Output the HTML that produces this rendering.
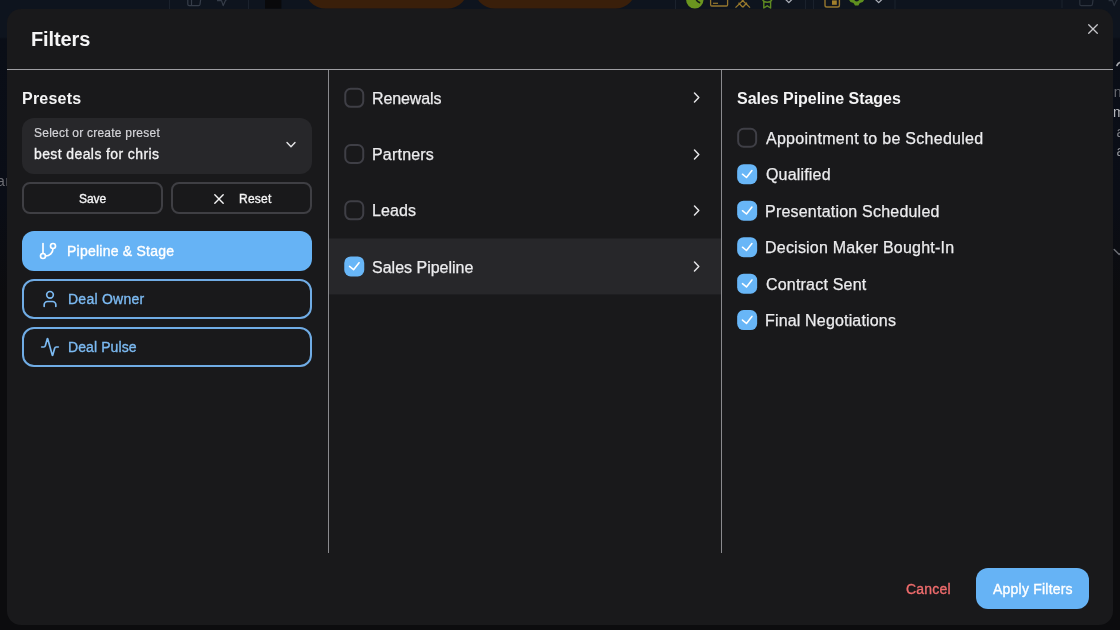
<!DOCTYPE html>
<html lang="en">
<head>
<meta charset="utf-8">
<title>Filters</title>
<style>
html,body{margin:0;padding:0;}
body{width:1120px;height:630px;overflow:hidden;position:relative;background:#0c0c0e;font-family:"Liberation Sans",sans-serif;color:#ececee;}
.abs{position:absolute;}
#bgtop{left:0;top:0;width:1120px;height:320px;background:linear-gradient(#0e141e 0,#0e141e 37px,#0a0e17 39px,#0a0d16 200px,#0c0c0e 300px);}
#modal{left:7px;top:9px;width:1106px;height:615.5px;border-radius:14px;background:#19191b;}
.t{position:absolute;white-space:nowrap;line-height:1;will-change:transform;}
.hl{left:7px;top:69px;width:1106px;height:1px;background:#9e9ea3;}
.vl{top:70px;width:1px;height:482.5px;background:#8a8a8e;}
.cb{position:absolute;box-sizing:border-box;width:20px;height:20px;border:2px solid #3f3f46;border-radius:6.5px;}
.cb.on{background:#68b6f7;border:0;}
.cb svg{position:absolute;left:0;top:0;}
.btn{position:absolute;box-sizing:border-box;border-radius:12px;}
svg{position:absolute;overflow:visible;}
.ic{fill:none;stroke-width:2;stroke-linecap:round;stroke-linejoin:round;}
</style>
</head>
<body>
<div id="bgtop" class="abs"></div>
<svg style="left:0;top:0" width="1120" height="12" viewBox="0 0 1120 12">
<rect x="169" y="0" width="1" height="10" fill="#1b222d"/><rect x="248" y="0" width="1" height="10" fill="#1b222d"/>
<path d="M187.8 -3 V4.2 Q187.8 5.6 189.2 5.6 H198.6 Q199.8 5.6 200 4.4 L201 -3 M191.5 -3 V5.6" fill="none" stroke="#363d49" stroke-width="1.2"/>
<path d="M217 0.6 H221.5 L223.2 5.6 L225.6 0.2 L230 -2" fill="none" stroke="#363d49" stroke-width="1.2" stroke-linejoin="round"/>
<rect x="265" y="-2" width="16.4" height="10.6" fill="#09090b"/>
<rect x="305.2" y="-31.4" width="162.4" height="40" rx="20" fill="#3a1f0a"/>
<rect x="474.6" y="-31.4" width="161" height="40" rx="20" fill="#3a1f0a"/>
<rect x="675" y="0" width="1" height="10" fill="#1b222d"/><rect x="805" y="0" width="1" height="10" fill="#1a212c"/><rect x="813" y="0" width="1" height="10" fill="#1a212c"/><rect x="894.5" y="0" width="1" height="10" fill="#1b222d"/><rect x="1061.5" y="0" width="1" height="8" fill="#1b222d"/>
<circle cx="694.8" cy="-0.2" r="8.7" fill="#6a961f"/>
<path d="M695.5 -3 Q696 1.2 699.5 2.6" fill="none" stroke="#141c16" stroke-width="1.6" stroke-linecap="round"/>
<rect x="710.6" y="-6" width="17" height="12" rx="1.2" fill="none" stroke="#94762e" stroke-width="1.3"/>
<path d="M713 3.3 H718" stroke="#94762e" stroke-width="1.2"/>
<path d="M735.5 7.6 L744.5 -1 M750 7.6 L741 -1 M738.5 2.8 L742.8 7.2 M747 2.8 L742.8 7.2" fill="none" stroke="#9a7a2c" stroke-width="1.3"/>
<path d="M762.2 -2 Q762.5 2.2 767.2 2.2 Q772 2.2 772.2 -2 M763.8 1.6 V8 L767.2 5.8 L770.6 8 V1.6" fill="none" stroke="#5e8a22" stroke-width="1.4" stroke-linejoin="round"/>
<path d="M785.6 -0.6 L788.8 2.6 L792 -0.6" fill="none" stroke="#a9adb6" stroke-width="1.3" stroke-linecap="round" stroke-linejoin="round"/>
<rect x="825" y="-8" width="14.4" height="15" rx="1.8" fill="none" stroke="#94762e" stroke-width="1.4"/>
<rect x="832" y="0.4" width="4.8" height="4.4" fill="#a07f2c"/>
<path d="M848.5 -1 L850.5 2 L853.5 3 L855 5.6 H858.4 L859.8 3 L862.8 2 L864.8 -1 Z" fill="#5e8f1f"/>
<circle cx="856.7" cy="-1.2" r="2.6" fill="#10171f"/>
<path d="M875.4 -0.6 L878.7 2.6 L882 -0.6" fill="none" stroke="#a9adb6" stroke-width="1.3" stroke-linecap="round" stroke-linejoin="round"/>
<path d="M1079.8 -3 V4.2 Q1079.8 5.6 1081.2 5.6 H1091 Q1092.2 5.6 1092.4 4.4 L1093.4 -3" fill="none" stroke="#2c333e" stroke-width="1.2"/>
<path d="M1108.6 0.6 H1112.5 L1114.2 5.6 L1116.6 0.2 L1120 -1.6" fill="none" stroke="#2c333e" stroke-width="1.2" stroke-linejoin="round"/>
</svg>
<div class="t" style="left:-3.5px;top:174px;font-size:14px;color:#6f6f75;width:10.2px;overflow:hidden;letter-spacing:0.6px">an</div>
<div class="t" style="left:1113.4px;top:82.6px;font-size:14px;color:#66686e;line-height:19.8px;width:8px;overflow:hidden"><span style="margin-left:0.8px">no</span><br><span style="color:#b4b5ba">m</span><br><span style="color:#7d7f85;margin-left:3.6px">a</span><br><span style="color:#8e9096;margin-left:3.6px">a</span></div>
<svg style="left:1112px;top:58px" width="8" height="12" viewBox="0 0 8 12"><path d="M5 7.4 Q6 4.6 8.6 4.2" fill="none" stroke="#a6a8ad" stroke-width="1.7" stroke-linecap="round"/></svg>
<svg style="left:1112px;top:246.5px" width="8" height="12" viewBox="0 0 8 12"><path d="M2.2 2.6 L7.2 7.6 L9 6" fill="none" stroke="#6c6e74" stroke-width="1.4" stroke-linecap="round" stroke-linejoin="round"/></svg>

<div id="modal" class="abs"></div>
<div class="abs hl"></div>
<div class="abs vl" style="left:328px"></div>
<div class="abs vl" style="left:721px"></div>

<!-- close -->
<svg style="left:1087px;top:23px" width="12" height="12" viewBox="0 0 12 12"><path d="M1.7 1.7 L10.3 10.3 M10.3 1.7 L1.7 10.3" stroke="#c6c6ca" stroke-width="1.3" stroke-linecap="round" fill="none"/></svg>

<!-- preset select -->
<div class="abs" style="left:22px;top:118px;width:290px;height:56px;border-radius:12px;background:#27272a"></div>
<svg style="left:286px;top:141px" width="10" height="8" viewBox="0 0 10 8"><path d="M1 1.6 L5 5.8 L9 1.6" stroke="#e4e4e7" stroke-width="1.4" stroke-linecap="round" stroke-linejoin="round" fill="none"/></svg>

<div class="btn" style="left:22px;top:182px;width:141px;height:32px;border:2px solid #3f3f44;border-radius:8px"></div>
<div class="btn" style="left:171px;top:182px;width:141px;height:32px;border:2px solid #3f3f44;border-radius:8px"></div>
<svg style="left:213.4px;top:192.8px" width="12" height="12" viewBox="0 0 12 12"><path d="M1.8 1.8 L10.2 10.2 M10.2 1.8 L1.8 10.2" stroke="#f4f4f5" stroke-width="1.4" stroke-linecap="round" fill="none"/></svg>

<div class="btn" style="left:22px;top:231px;width:290px;height:40px;background:#66b3f5"></div>
<div class="btn" style="left:22px;top:279px;width:290px;height:40px;border:2px solid #70ace5"></div>
<div class="btn" style="left:22px;top:327px;width:290px;height:40px;border:2px solid #70ace5"></div>
<svg class="ic" style="left:38px;top:241px" width="20" height="20" viewBox="0 0 24 24" stroke="#fff"><line x1="6" x2="6" y1="3" y2="15"/><circle cx="18" cy="6" r="3"/><circle cx="6" cy="18" r="3"/><path d="M18 9a9 9 0 0 1-9 9"/></svg>
<svg class="ic" style="left:40px;top:289px" width="20" height="20" viewBox="0 0 24 24" stroke="#7cbaf2"><path d="M19 21v-2a4 4 0 0 0-4-4H9a4 4 0 0 0-4 4v2"/><circle cx="12" cy="7" r="4"/></svg>
<svg class="ic" style="left:40px;top:337px" width="20" height="20" viewBox="0 0 24 24" stroke="#7cbaf2"><path d="M22 12h-2.48a2 2 0 0 0-1.93 1.46l-2.35 8.36a.25.25 0 0 1-.48 0L9.24 2.18a.25.25 0 0 0-.48 0l-2.35 8.36A2 2 0 0 1 4.49 12H2"/></svg>

<!-- middle column -->
<svg style="left:329px;top:238px" width="392" height="57" viewBox="0 0 392 57"><rect x="0" y="0.45" width="392" height="56" fill="#27272a"/></svg>
<div class="cb" style="left:344px;top:87px;transform:translate(0.25px,0.80px)"></div>
<div class="cb" style="left:344px;top:144px;transform:translate(0.25px,0.00px)"></div>
<div class="cb" style="left:344px;top:200px;transform:translate(0.25px,0.30px)"></div>
<div class="cb on" style="left:344px;top:256px;transform:translate(0.25px,0.40px)"><svg width="20" height="20" viewBox="0 0 20 20"><path d="M5.3 10 L9.3 13.3 L14.8 6.3" stroke="#fff" stroke-width="1.55" stroke-linecap="round" stroke-linejoin="round" fill="none"/></svg></div>
<svg style="left:692px;top:91.3px" width="9" height="13" viewBox="0 0 9 13"><path d="M2.5 2.1 L6.8 6.5 L2.5 10.9" stroke="#e4e4e7" stroke-width="1.5" stroke-linecap="round" stroke-linejoin="round" fill="none"/></svg>
<svg style="left:692px;top:147.5px" width="9" height="13" viewBox="0 0 9 13"><path d="M2.5 2.1 L6.8 6.5 L2.5 10.9" stroke="#e4e4e7" stroke-width="1.5" stroke-linecap="round" stroke-linejoin="round" fill="none"/></svg>
<svg style="left:692px;top:203.7px" width="9" height="13" viewBox="0 0 9 13"><path d="M2.5 2.1 L6.8 6.5 L2.5 10.9" stroke="#e4e4e7" stroke-width="1.5" stroke-linecap="round" stroke-linejoin="round" fill="none"/></svg>
<svg style="left:692px;top:259.9px" width="9" height="13" viewBox="0 0 9 13"><path d="M2.5 2.1 L6.8 6.5 L2.5 10.9" stroke="#e4e4e7" stroke-width="1.5" stroke-linecap="round" stroke-linejoin="round" fill="none"/></svg>

<!-- right column -->
<div class="cb" style="left:737px;top:127px;transform:translate(0.15px,0.75px)"></div>
<div class="cb on" style="left:737px;top:164px;transform:translate(0.15px,0.20px)"><svg width="20" height="20" viewBox="0 0 20 20"><path d="M5.3 10 L9.3 13.3 L14.8 6.3" stroke="#fff" stroke-width="1.55" stroke-linecap="round" stroke-linejoin="round" fill="none"/></svg></div>
<div class="cb on" style="left:737px;top:200px;transform:translate(0.15px,0.70px)"><svg width="20" height="20" viewBox="0 0 20 20"><path d="M5.3 10 L9.3 13.3 L14.8 6.3" stroke="#fff" stroke-width="1.55" stroke-linecap="round" stroke-linejoin="round" fill="none"/></svg></div>
<div class="cb on" style="left:737px;top:237px;transform:translate(0.15px,0.20px)"><svg width="20" height="20" viewBox="0 0 20 20"><path d="M5.3 10 L9.3 13.3 L14.8 6.3" stroke="#fff" stroke-width="1.55" stroke-linecap="round" stroke-linejoin="round" fill="none"/></svg></div>
<div class="cb on" style="left:737px;top:273px;transform:translate(0.15px,0.65px)"><svg width="20" height="20" viewBox="0 0 20 20"><path d="M5.3 10 L9.3 13.3 L14.8 6.3" stroke="#fff" stroke-width="1.55" stroke-linecap="round" stroke-linejoin="round" fill="none"/></svg></div>
<div class="cb on" style="left:737px;top:310px;transform:translate(0.15px,0.10px)"><svg width="20" height="20" viewBox="0 0 20 20"><path d="M5.3 10 L9.3 13.3 L14.8 6.3" stroke="#fff" stroke-width="1.55" stroke-linecap="round" stroke-linejoin="round" fill="none"/></svg></div>

<!-- footer -->
<div class="btn" style="left:976px;top:568.2px;width:113px;height:40.6px;background:#66b3f5"></div>

<div class="t" id="tFilters" style="left:30.70px;top:29.00px;font-size:20px;font-weight:700;color:#f4f4f5;letter-spacing:-0.117px;">Filters</div>
<div class="t" id="tPresets" style="left:22.00px;top:91.00px;font-size:16px;font-weight:700;color:#f4f4f5;letter-spacing:0.217px;">Presets</div>
<div class="t" id="tSel" style="left:34.00px;top:127.00px;font-size:12px;font-weight:400;color:#d4d4d8;letter-spacing:0.227px;-webkit-text-stroke:0.2px currentColor;">Select or create preset</div>
<div class="t" id="tBest" style="left:34.00px;top:147.00px;font-size:14px;font-weight:400;color:#f4f4f5;letter-spacing:0.395px;-webkit-text-stroke:0.3px currentColor;">best deals for chris</div>
<div class="t" id="tSave" style="left:79.40px;top:193.00px;font-size:12px;font-weight:400;color:#f4f4f5;letter-spacing:-0.067px;-webkit-text-stroke:0.35px currentColor;">Save</div>
<div class="t" id="tReset" style="left:238.50px;top:193.00px;font-size:12px;font-weight:400;color:#f4f4f5;letter-spacing:0.225px;-webkit-text-stroke:0.35px currentColor;">Reset</div>
<div class="t" id="tPipe" style="left:66.50px;top:244.00px;font-size:14px;font-weight:400;color:#ffffff;letter-spacing:0.233px;-webkit-text-stroke:0.35px currentColor;">Pipeline &amp; Stage</div>
<div class="t" id="tOwner" style="left:67.60px;top:292.00px;font-size:14px;font-weight:400;color:#7cbaf2;letter-spacing:0.244px;-webkit-text-stroke:0.35px currentColor;">Deal Owner</div>
<div class="t" id="tPulse" style="left:67.60px;top:340.00px;font-size:14px;font-weight:400;color:#7cbaf2;letter-spacing:0.089px;-webkit-text-stroke:0.35px currentColor;">Deal Pulse</div>
<div class="t" id="tRen" style="left:372.40px;top:91.00px;font-size:16px;font-weight:400;color:#ececee;letter-spacing:-0.114px;-webkit-text-stroke:0.25px currentColor;">Renewals</div>
<div class="t" id="tPar" style="left:372.40px;top:147.00px;font-size:16px;font-weight:400;color:#ececee;letter-spacing:0.200px;-webkit-text-stroke:0.25px currentColor;">Partners</div>
<div class="t" id="tLea" style="left:372.40px;top:203.00px;font-size:16px;font-weight:400;color:#ececee;letter-spacing:0.125px;-webkit-text-stroke:0.25px currentColor;">Leads</div>
<div class="t" id="tSal" style="left:372.00px;top:260.00px;font-size:16px;font-weight:400;color:#ececee;letter-spacing:0.000px;-webkit-text-stroke:0.25px currentColor;">Sales Pipeline</div>
<div class="t" id="tStages" style="left:736.70px;top:91.00px;font-size:16px;font-weight:700;color:#f4f4f5;letter-spacing:-0.035px;">Sales Pipeline Stages</div>
<div class="t" id="tS1" style="left:766.20px;top:131.00px;font-size:16px;font-weight:400;color:#ececee;letter-spacing:0.277px;-webkit-text-stroke:0.25px currentColor;">Appointment to be Scheduled</div>
<div class="t" id="tS2" style="left:766.20px;top:167.00px;font-size:16px;font-weight:400;color:#ececee;letter-spacing:0.175px;-webkit-text-stroke:0.25px currentColor;">Qualified</div>
<div class="t" id="tS3" style="left:765.20px;top:204.00px;font-size:16px;font-weight:400;color:#ececee;letter-spacing:0.214px;-webkit-text-stroke:0.25px currentColor;">Presentation Scheduled</div>
<div class="t" id="tS4" style="left:765.20px;top:240.00px;font-size:16px;font-weight:400;color:#ececee;letter-spacing:0.217px;-webkit-text-stroke:0.25px currentColor;">Decision Maker Bought-In</div>
<div class="t" id="tS5" style="left:766.20px;top:277.00px;font-size:16px;font-weight:400;color:#ececee;letter-spacing:0.200px;-webkit-text-stroke:0.25px currentColor;">Contract Sent</div>
<div class="t" id="tS6" style="left:765.20px;top:313.00px;font-size:16px;font-weight:400;color:#ececee;letter-spacing:0.165px;-webkit-text-stroke:0.25px currentColor;">Final Negotiations</div>
<div class="t" id="tApply" style="left:992.80px;top:582.00px;font-size:14px;font-weight:400;color:#ffffff;letter-spacing:0.217px;-webkit-text-stroke:0.35px currentColor;">Apply Filters</div>
<div class="t" id="tCancel" style="left:905.70px;top:582.00px;font-size:14px;font-weight:400;color:#ef6c6d;letter-spacing:0.220px;-webkit-text-stroke:0.35px currentColor;">Cancel</div>
</body>
</html>
